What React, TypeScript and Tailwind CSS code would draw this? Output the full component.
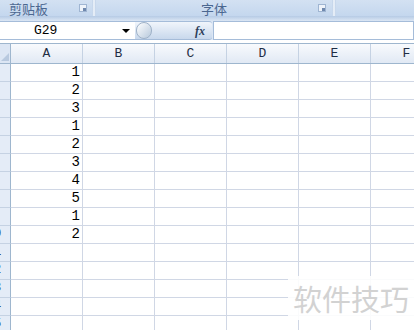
import React from 'react';

const cols = ['A', 'B', 'C', 'D', 'E', 'F'];
const values = [1, 2, 3, 1, 2, 3, 4, 5, 1, 2];
const rowCount = 15;

const mono = { fontFamily: '"Liberation Mono", "Noto Sans CJK SC", monospace' };

const Launcher: React.FC = () => (
  <div className="w-[8px] h-[8px] border border-[#9fb5d2] bg-[#eef3fa] flex items-end justify-end">
    <div className="w-[3px] h-[3px] bg-[#6f88ad]" />
  </div>
);

const App: React.FC = () => {
  const rows = Array.from({ length: rowCount }, (_, i) => i + 1);

  return (
    <div
      className="relative w-[414px] h-[330px] overflow-hidden bg-white"
      style={{ fontFamily: '"Noto Sans CJK SC", "Liberation Sans", sans-serif' }}
    >
      {/* Ribbon group labels */}
      <div className="flex h-[16px] bg-[#dfe9f5]">
        <div className="w-[92px] flex items-center justify-between pl-[9px] pr-[5px] bg-gradient-to-b from-[#d3e1f2] to-[#c4d7ee]">
          <span className="text-[13px] leading-none text-[#4b6790]">剪贴板</span>
          <Launcher />
        </div>
        <div className="w-[4px] bg-gradient-to-r from-[#b9cde6] via-[#f3f7fc] to-[#b9cde6]" />
        <div className="w-[236px] relative flex items-center justify-center bg-gradient-to-b from-[#d3e1f2] to-[#c4d7ee]">
          <span className="text-[13px] leading-none text-[#4b6790]">字体</span>
          <div className="absolute right-[6px] top-[4px]">
            <Launcher />
          </div>
        </div>
        <div className="w-[4px] bg-gradient-to-r from-[#b9cde6] via-[#f3f7fc] to-[#b9cde6]" />
        <div className="flex-1 bg-gradient-to-b from-[#d3e1f2] to-[#c4d7ee]" />
      </div>
      <div className="h-[5px] bg-gradient-to-b from-[#b6cbe5] to-[#dbe6f4]" />

      {/* Formula bar */}
      <div className="flex h-[19px] bg-[#dbe6f4]">
        <div className="w-[135px] bg-white flex items-center relative border-y border-[#a5bcd9]">
          <span className="absolute left-[34px] text-[13px] leading-none text-black" style={mono}>G29</span>
          <div className="absolute left-[122px] top-[7px] w-0 h-0 border-l-[4px] border-r-[4px] border-t-[4px] border-l-transparent border-r-transparent border-t-black" />
        </div>
        <div className="w-[77px] relative flex items-center rounded-r-[3px] bg-gradient-to-b from-[#f1f5fb] to-[#c8d8ec] border-y border-[#a5bcd9]">
          <div className="absolute left-[1px] top-[0px] w-[16px] h-[17px] rounded-full bg-gradient-to-br from-[#ffffff] to-[#b8c9dc] border border-[#9fb2c8]" />
          <span
            className="absolute right-[7px] text-[12px] leading-none italic font-bold text-[#2c3e5a]"
            style={{ fontFamily: '"Liberation Serif", serif' }}
          >
            fx
          </span>
        </div>
        <div className="flex-1 bg-white border border-[#a5bcd9] ml-[1px]" />
      </div>
      <div className="h-[3px] bg-white" />
      <div className="h-[1px] bg-[#9eb6ce]" />

      {/* Column header */}
      <div className="flex h-[20px] bg-gradient-to-b from-[#f8fafd] to-[#e1e9f4] border-b border-[#9eb6ce]">
        <div className="w-[11px] relative border-r border-[#9eb6ce] bg-[#dce6f4] flex-shrink-0">
          <div className="absolute right-[1px] bottom-[2px] w-0 h-0 border-b-[8px] border-l-[8px] border-b-[#b8c9df] border-l-transparent" />
        </div>
        {cols.map((c) => (
          <div
            key={c}
            className="w-[72px] flex-shrink-0 flex items-center justify-center border-r border-[#c5d2e3] text-[13px] leading-none text-[#1f2d44]"
            style={mono}
          >
            {c}
          </div>
        ))}
      </div>

      {/* Grid rows */}
      {rows.map((r) => (
        <div key={r} className="flex h-[18px]">
          <div className="w-[11px] flex-shrink-0 overflow-hidden bg-[#e4ecf7] border-r border-[#9eb6ce] border-b border-b-[#c5d2e3]">
            <div className="w-[30px] ml-[-21px] text-center text-[12px] leading-[17px] text-[#1f2d44]" style={mono}>
              {r > 9 ? r : ''}
            </div>
          </div>
          {cols.map((c, ci) => (
            <div
              key={c}
              className="w-[72px] flex-shrink-0 border-r border-b border-[#d0d7e5] text-right pr-[2px] text-[14px] leading-[17px] text-black"
              style={mono}
            >
              {ci === 0 && r <= values.length ? values[r - 1] : ''}
            </div>
          ))}
        </div>
      ))}

      {/* Watermark */}
      <div className="absolute left-[288px] top-[276px] w-[126px] h-[44px] bg-white/90 flex items-center justify-center">
        <span className="whitespace-nowrap text-[29px] leading-none text-[#d2d2d2]">软件技巧</span>
      </div>
    </div>
  );
};

export default App;
